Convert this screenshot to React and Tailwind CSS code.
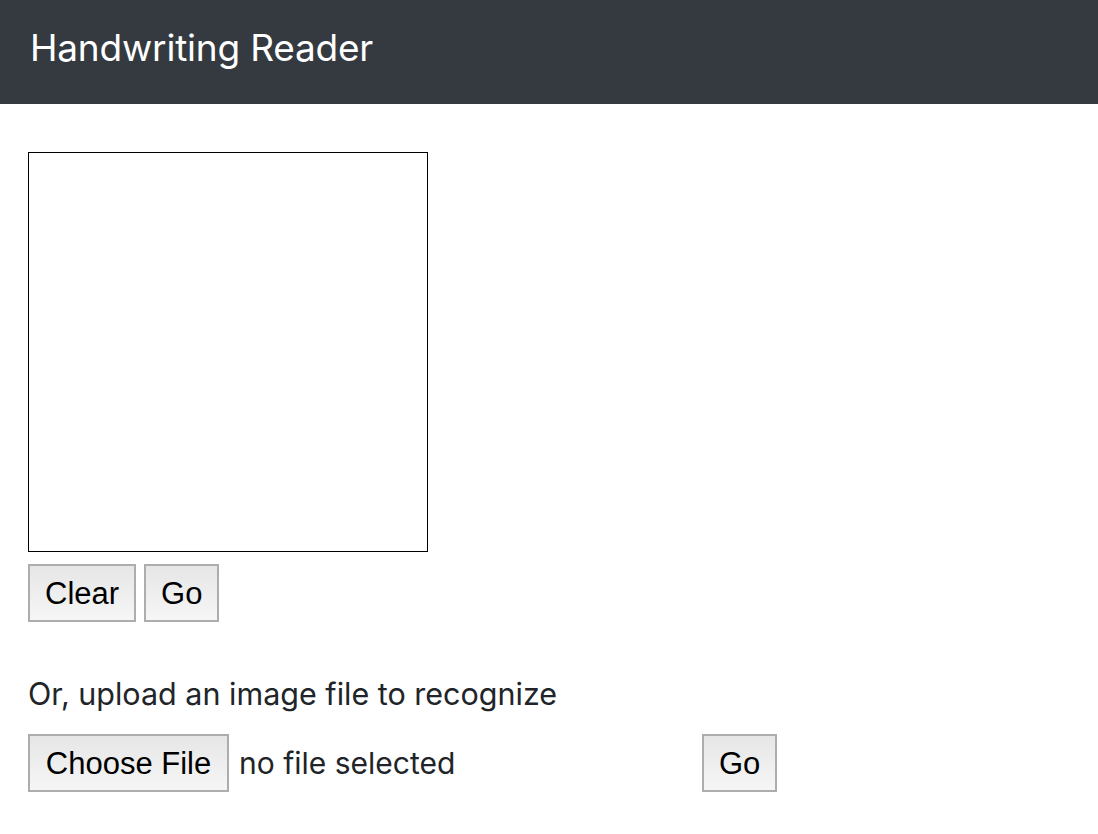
export default function App() {
  const btn =
    "h-[58px] border-2 border-[#adadad] bg-gradient-to-b from-[#e6e6e6] to-[#f6f6f6] text-black text-[31px] leading-none px-[15px] font-['Liberation_Sans',Arial,sans-serif]";
  return (
    <div className="min-h-[834px] bg-white font-['Inter','Liberation_Sans',sans-serif] text-[#212529]">
      <div className="h-[104px] bg-[#343a40] flex items-center pl-[30px] pb-[8px]">
        <span className="text-white text-[37px] tracking-[-0.2px]">Handwriting Reader</span>
      </div>
      <div className="pl-[28px] pt-[48px]">
        <div className="w-[400px] h-[400px] border border-black" />
        <div className="flex gap-[8px] mt-[12px]">
          <button className={btn}>Clear</button>
          <button className={btn + " px-[14px]"}>Go</button>
        </div>
        <div className="mt-[54px] text-[30.5px] leading-[36px]">Or, upload an image file to recognize</div>
        <div className="flex items-center mt-[22px]">
          <button className={btn + " w-[201px] px-0"}>Choose File</button>
          <span className="ml-[10px] text-[30px] w-[463px]">no file selected</span>
          <button className={btn + " px-[14px]"}>Go</button>
        </div>
      </div>
    </div>
  );
}
